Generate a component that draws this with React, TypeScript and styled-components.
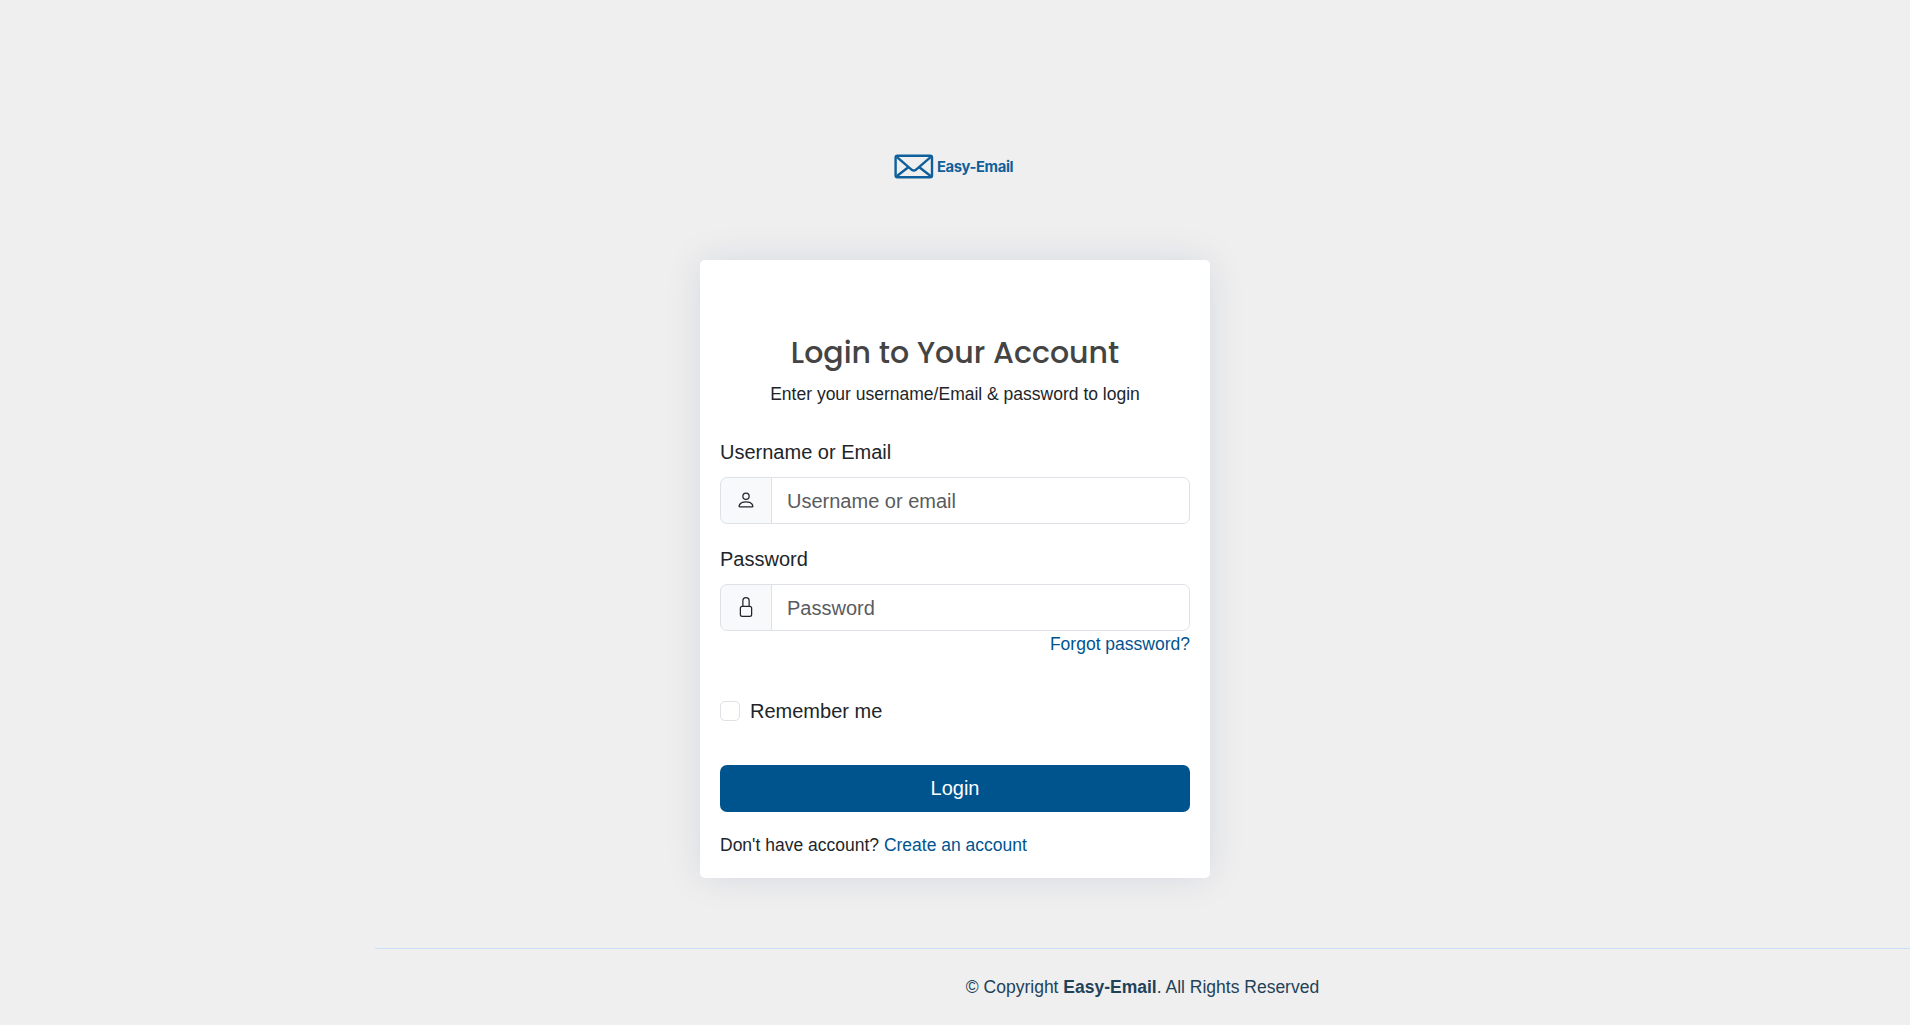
import React,{PropsWithChildren} from 'react'
import styled, { createGlobalStyle } from 'styled-components'

const PersonIcon = () => (
  <Icon viewBox="0 0 16 16">
    <path d="M8 8a3 3 0 1 0 0-6 3 3 0 0 0 0 6m2-3a2 2 0 1 1-4 0 2 2 0 0 1 4 0m4 8c0 1-1 1-1 1H3s-1 0-1-1 1-4 6-4 6 3 6 4m-1-.004c-.001-.246-.154-.986-.832-1.664C11.516 10.68 10.289 10 8 10s-3.516.68-4.168 1.332c-.678.678-.83 1.418-.832 1.664z" />
  </Icon>
)

const LockIcon = () => (
  <Icon viewBox="0 0 16 16">
    <path d="M8 1a2 2 0 0 1 2 2v4H6V3a2 2 0 0 1 2-2m3 6V3a3 3 0 0 0-6 0v4a2 2 0 0 0-2 2v5a2 2 0 0 0 2 2h6a2 2 0 0 0 2-2V9a2 2 0 0 0-2-2M5 8h6a1 1 0 0 1 1 1v5a1 1 0 0 1-1 1H5a1 1 0 0 1-1-1V9a1 1 0 0 1 1-1" />
  </Icon>
)

const EnvelopeIcon = () => (
  <Envelope viewBox="0 0 40 25">
    <rect x="1.6" y="1.8" width="36.4" height="21.4" rx="1.8" />
    <path d="M3 3.2 L17.8 15.8 Q19.8 17.4 21.8 15.8 L36.6 3.2 M3 22 L14.6 13 M36.6 22 L25 13" />
  </Envelope>
)

type FieldProps = PropsWithChildren<{
  id: string
  label: string
  placeholder: string
  type: string
}>

const Field:React.FC<FieldProps> = ({id, label, placeholder, type, children}) => {
  return (
    <div>
      <Label htmlFor={id}>{label}</Label>
      <InputGroup>
        <Addon>{children}</Addon>
        <Input id={id} type={type} placeholder={placeholder} />
      </InputGroup>
    </div>
  )
}

const App:React.FC = () => {
  return (
    <Page>
      <GlobalStyle />
      <Main>
        <Logo href="#">
          <EnvelopeIcon />
          <LogoText>Easy-Email</LogoText>
        </Logo>
        <Card>
          <Title>Login to Your Account</Title>
          <Subtitle>Enter your username/Email &amp; password to login</Subtitle>
          <Form onSubmit={(e) => e.preventDefault()}>
            <Field id="username" label="Username or Email" placeholder="Username or email" type="text">
              <PersonIcon />
            </Field>
            <Field id="password" label="Password" placeholder="Password" type="password">
              <LockIcon />
            </Field>
            <Forgot>
              <Link href="#">Forgot password?</Link>
            </Forgot>
            <Remember>
              <Checkbox type="checkbox" />
              Remember me
            </Remember>
            <Button type="submit">Login</Button>
            <Register>
              Don't have account? <Link href="#">Create an account</Link>
            </Register>
          </Form>
        </Card>
      </Main>
      <Footer>
        <span>© Copyright <strong>Easy-Email</strong>. All Rights Reserved</span>
      </Footer>
    </Page>
  )
}

export default App


const GlobalStyle = createGlobalStyle`
  * {
    box-sizing: border-box;
  }
  body {
    margin: 0;
    background: #efefef;
    color: #212529;
    font-family: Arial, "Liberation Sans", sans-serif;
    font-size: 20px;
    line-height: 30px;
  }
`

const Page = styled.div`
  height: 1025px;
  display: flex;
  flex-direction: column;
  overflow: hidden;
`

const Main = styled.main`
  display: flex;
  flex-direction: column;
  align-items: center;
  padding-top: 151px;
`

const Logo = styled.a`
  display: flex;
  align-items: center;
  gap: 3px;
  height: 31px;
  margin-bottom: 78px;
  margin-right: 3px;
  text-decoration: none;
`

const Envelope = styled.svg`
  width: 40px;
  height: 25px;
  fill: none;
  stroke: #0f5f9c;
  stroke-width: 2.4;
`

const LogoText = styled.span`
  color: #0f5f9c;
  font-family: Inter, sans-serif;
  font-size: 14.8px;
  font-weight: 700;
  letter-spacing: -0.4px;
`

const Card = styled.section`
  width: 510px;
  height: 618px;
  padding: 75px 20px 0;
  background: #fff;
  border-radius: 5px;
  box-shadow: 0 0 37px rgba(1, 41, 112, 0.1);
`

const Title = styled.h5`
  margin: 0;
  color: #444;
  font-family: Poppins, sans-serif;
  font-size: 30px;
  font-weight: 500;
  line-height: 36px;
  text-align: center;
  white-space: nowrap;
`

const Subtitle = styled.p`
  margin: 8px 0 28px;
  font-size: 17.5px;
  text-align: center;
`

const Form = styled.form`
  display: grid;
  row-gap: 20px;
`

const Label = styled.label`
  display: block;
  margin-bottom: 10px;
`

const InputGroup = styled.div`
  display: flex;
  height: 47px;
`

const Addon = styled.span`
  display: flex;
  align-items: center;
  justify-content: center;
  width: 52px;
  padding-bottom: 1px;
  background: #f8f9fa;
  border: 1px solid #dee2e6;
  border-radius: 7px 0 0 7px;
`

const Icon = styled.svg`
  width: 20px;
  height: 20px;
  fill: #212529;
`

const Input = styled.input`
  flex: 1;
  min-width: 0;
  margin-left: -1px;
  padding: 0 15px;
  background: #fff;
  border: 1px solid #dee2e6;
  border-radius: 0 7px 7px 0;
  font: inherit;

  &::placeholder{
    color: #595c5f;
    opacity: 1;
  }
`

const Link = styled.a`
  color: #00548e;
  text-decoration: none;
`

const Forgot = styled.div`
  margin-top: -22px;
  font-size: 17.5px;
  text-align: right;
`

const Remember = styled.label`
  display: flex;
  align-items: center;
  gap: 10px;
  margin-top: 17px;
`

const Checkbox = styled.input`
  appearance: none;
  width: 20px;
  height: 20px;
  margin: 0;
  background: #fff;
  border: 1px solid #dee2e6;
  border-radius: 5px;
`

const Button = styled.button`
  height: 47px;
  margin-top: 19px;
  padding-bottom: 2px;
  background: #00548e;
  border: 0;
  border-radius: 7px;
  color: #fff;
  font: inherit;
`

const Register = styled.p`
  margin: -2px 0 0;
  font-size: 17.5px;
`

const Footer = styled.footer`
  margin: 70px 0 0 375px;
  padding-top: 23px;
  border-top: 1px solid #cddfff;
  color: #1f4258;
  font-size: 17.5px;
  text-align: center;
`
